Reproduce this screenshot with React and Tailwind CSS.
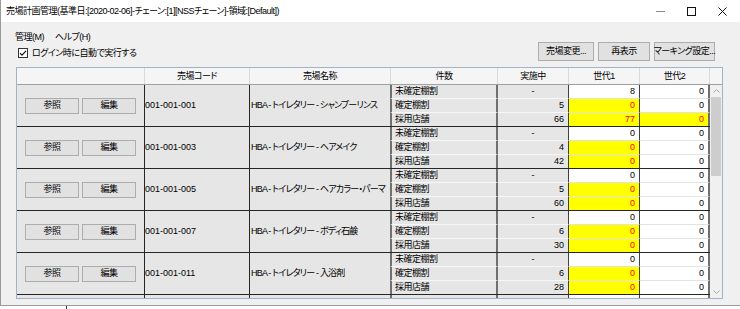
import React from 'react';

const labels = ['未確定棚割', '確定棚割', '採用店舗'];

// each row: [実施中, 世代1, 世代1黄, 世代2, 世代2黄]
const groups = [
    {
        code: '001-001-001',
        name: 'HBA - トイレタリー - シャンプーリンス',
        rows: [['-', '8', false, '0', false], ['5', '0', true, '0', false], ['66', '77', true, '0', true]],
    },
    {
        code: '001-001-003',
        name: 'HBA - トイレタリー - ヘアメイク',
        rows: [['-', '0', false, '0', false], ['4', '0', true, '0', false], ['42', '0', true, '0', false]],
    },
    {
        code: '001-001-005',
        name: 'HBA - トイレタリー - ヘアカラー・パーマ',
        rows: [['-', '0', false, '0', false], ['5', '0', true, '0', false], ['60', '0', true, '0', false]],
    },
    {
        code: '001-001-007',
        name: 'HBA - トイレタリー - ボディ石鹸',
        rows: [['-', '0', false, '0', false], ['6', '0', true, '0', false], ['30', '0', true, '0', false]],
    },
    {
        code: '001-001-011',
        name: 'HBA - トイレタリー - 入浴剤',
        rows: [['-', '0', false, '0', false], ['6', '0', true, '0', false], ['28', '0', true, '0', false]],
    },
];

const Btn = ({ children, w }) => (
    <div className={`flex h-[16px] ${w} items-center justify-center border border-[#adadad] bg-[#e1e1e1]`}>
        {children}
    </div>
);

const TopBtn = ({ children, w }) => (
    <div className={`flex h-[19px] ${w} items-center justify-center whitespace-nowrap border border-[#adadad] bg-[#e1e1e1]`}>
        {children}
    </div>
);

const Group = ({ g }) => (
    <div className="flex h-[42px] shrink-0 border-b border-[#262626]">
        <div className="flex w-[128px] items-center gap-[3px] border-r border-[#262626] bg-[#e6e6e6] pl-[8px]">
            <Btn w="w-[54px]">参照</Btn>
            <Btn w="w-[54px]">編集</Btn>
        </div>
        <div className="flex w-[105px] items-center border-r border-[#262626] bg-[#e6e6e6] tracking-normal">{g.code}</div>
        <div className="flex w-[140px] items-center overflow-hidden whitespace-nowrap bg-[#e6e6e6] pl-[1px] tracking-[-0.8px]">{g.name}</div>
        <div className="flex w-[320px] flex-col">
            {g.rows.map((r, i) => {
                const last = i === 2;
                const h = last ? 'flex-1' : 'h-[14px]';
                const line = last ? '' : 'border-b';
                return (
                    <div key={i} className={`flex ${h}`}>
                        <div className={`flex w-[108px] items-center border-x-2 border-x-[#707070] ${line} border-b-[#f7f7f7] bg-[#e6e6e6] pl-[3px]`}>
                            {labels[i]}
                        </div>
                        <div className={`flex w-[71px] items-center border-r border-r-[#404040] ${line} border-b-[#f7f7f7] bg-[#e6e6e6] pr-[4px] tracking-normal ${r[0] === '-' ? 'justify-center pl-[4px]' : 'justify-end'}`}>
                            {r[0]}
                        </div>
                        <div className={`flex w-[71px] items-center justify-end border-r border-r-[#404040] ${line} border-b-[#e3e3e3] pr-[4px] tracking-normal ${r[2] ? 'bg-[#ffff00] text-[#ff0000]' : 'bg-white'}`}>
                            {r[1]}
                        </div>
                        <div className={`flex w-[70px] items-center justify-end border-r-2 border-r-[#707070] ${line} border-b-[#e3e3e3] pr-[4px] tracking-normal ${r[4] ? 'bg-[#ffff00] text-[#ff0000]' : 'bg-white'}`}>
                            {r[3]}
                        </div>
                    </div>
                );
            })}
        </div>
    </div>
);

// the half-scrolled row at the bottom of the grid, only its top strip shows
const PartialGroup = () => (
    <div className="flex h-[4px] shrink-0">
        <div className="w-[128px] border-r border-[#262626] bg-[#e6e6e6]" />
        <div className="w-[105px] border-r border-[#262626] bg-[#e6e6e6]" />
        <div className="w-[140px] bg-[#e6e6e6]" />
        <div className="w-[108px] border-x-2 border-x-[#707070] bg-[#e6e6e6]" />
        <div className="w-[71px] border-r border-r-[#404040] bg-[#e6e6e6]" />
        <div className="w-[71px] border-r border-r-[#404040] bg-white" />
        <div className="w-[70px] border-r-2 border-r-[#707070] bg-white" />
    </div>
);

const App = () => {
    return (
        <div className="relative h-[309px] w-[740px] overflow-hidden bg-white text-[9px] leading-none tracking-[-0.5px] text-black [font-family:'Liberation_Sans','Noto_Sans_CJK_JP',sans-serif] [font-feature-settings:'palt']">
            <div className="flex h-[306px] flex-col border-b border-l border-[#9a9a9a]">
                {/* title bar */}
                <div className="flex h-[22px] shrink-0 items-center bg-white">
                    <div className="flex-1 whitespace-nowrap pl-[5px] pt-[1px]">
                        売場計画管理(基準日:[2020-02-06]-チェーン:[1][NSSチェーン]-領域:[Default])
                    </div>
                    <div className="flex h-full items-center pr-[2px]">
                        <div className="flex h-full w-[31px] items-center justify-center">
                            <svg width="9" height="9" viewBox="0 0 9 9">
                                <path d="M0 4.5H9" stroke="#8a8a8a" strokeWidth="1" />
                            </svg>
                        </div>
                        <div className="flex h-full w-[31px] items-center justify-center">
                            <svg width="9" height="9" viewBox="0 0 9 9">
                                <rect x="0.5" y="0.5" width="8" height="8" fill="none" stroke="#111" strokeWidth="1" />
                            </svg>
                        </div>
                        <div className="flex h-full w-[31px] items-center justify-center">
                            <svg width="9" height="9" viewBox="0 0 9 9">
                                <path d="M0.5 0.5L8.5 8.5M8.5 0.5L0.5 8.5" stroke="#111" strokeWidth="1" />
                            </svg>
                        </div>
                    </div>
                </div>

                {/* body */}
                <div className="flex flex-1 flex-col bg-[#f0f0f0]">
                    <div className="flex h-[39px] justify-between pt-[8px]">
                        <div className="flex flex-col">
                            <div className="flex h-[14px] items-center gap-[11px] pl-[14px]">
                                <span>管理(M)</span>
                                <span>ヘルプ(H)</span>
                            </div>
                            <div className="mt-[2px] flex h-[14px] items-center gap-[4px] pl-[17px]">
                                <svg width="10" height="10" viewBox="0 0 10 10">
                                    <rect x="0.5" y="0.5" width="9" height="9" fill="#fff" stroke="#333" />
                                    <path d="M2 5.2L4 7.2L8 2.8" fill="none" stroke="#111" strokeWidth="1.2" />
                                </svg>
                                <span>ログイン時に自動で実行する</span>
                            </div>
                        </div>
                        <div className="flex items-end gap-[4px] pr-[25px]">
                            <TopBtn w="w-[56px]">売場変更...</TopBtn>
                            <TopBtn w="w-[52px]">再表示</TopBtn>
                            <TopBtn w="w-[61px]">マーキング設定...</TopBtn>
                        </div>
                    </div>

                    {/* grid */}
                    <div className="ml-[15px] mt-[6px] flex h-[232px] w-[707px] flex-col border border-[#a3b2c6] bg-[#f0f0f0]">
                        <div className="flex h-[17px] shrink-0 border-b border-[#a0a0a0] bg-[#f5f5f5]">
                            <div className="w-[128px] border-r border-[#dadada]" />
                            <div className="flex w-[105px] items-center justify-center border-r border-[#dadada]">売場コード</div>
                            <div className="flex w-[141px] items-center justify-center border-r border-[#dadada]">売場名称</div>
                            <div className="flex w-[107px] items-center justify-center border-r border-[#dadada]">件数</div>
                            <div className="flex w-[71px] items-center justify-center border-r border-[#dadada]">実施中</div>
                            <div className="flex w-[71px] items-center justify-center border-r border-[#dadada]">世代1</div>
                            <div className="flex w-[70px] items-center justify-center border-r border-[#dadada]">世代2</div>
                            <div className="flex-1" />
                        </div>
                        <div className="flex min-h-0 flex-1">
                            <div className="flex w-[693px] flex-col overflow-hidden">
                                {groups.map((g) => (
                                    <Group key={g.code} g={g} />
                                ))}
                                <PartialGroup />
                            </div>
                            <div className="flex w-[12px] flex-col bg-[#f0f0f0]">
                                <div className="flex h-[12px] items-center justify-center">
                                    <svg width="7" height="4" viewBox="0 0 7 4">
                                        <path d="M0.5 3.5L3.5 0.5L6.5 3.5" fill="none" stroke="#a6a6a6" />
                                    </svg>
                                </div>
                                <div className="mx-[1px] h-[79px] bg-[#cdcdcd]" />
                                <div className="flex-1" />
                                <div className="flex h-[12px] items-center justify-center">
                                    <svg width="7" height="4" viewBox="0 0 7 4">
                                        <path d="M0.5 0.5L3.5 3.5L6.5 0.5" fill="none" stroke="#a6a6a6" />
                                    </svg>
                                </div>
                            </div>
                        </div>
                    </div>
                </div>
            </div>
            <div className="absolute bottom-0 left-[66px] h-[3px] w-px bg-[#333]" />
        </div>
    );
};

export default App;
